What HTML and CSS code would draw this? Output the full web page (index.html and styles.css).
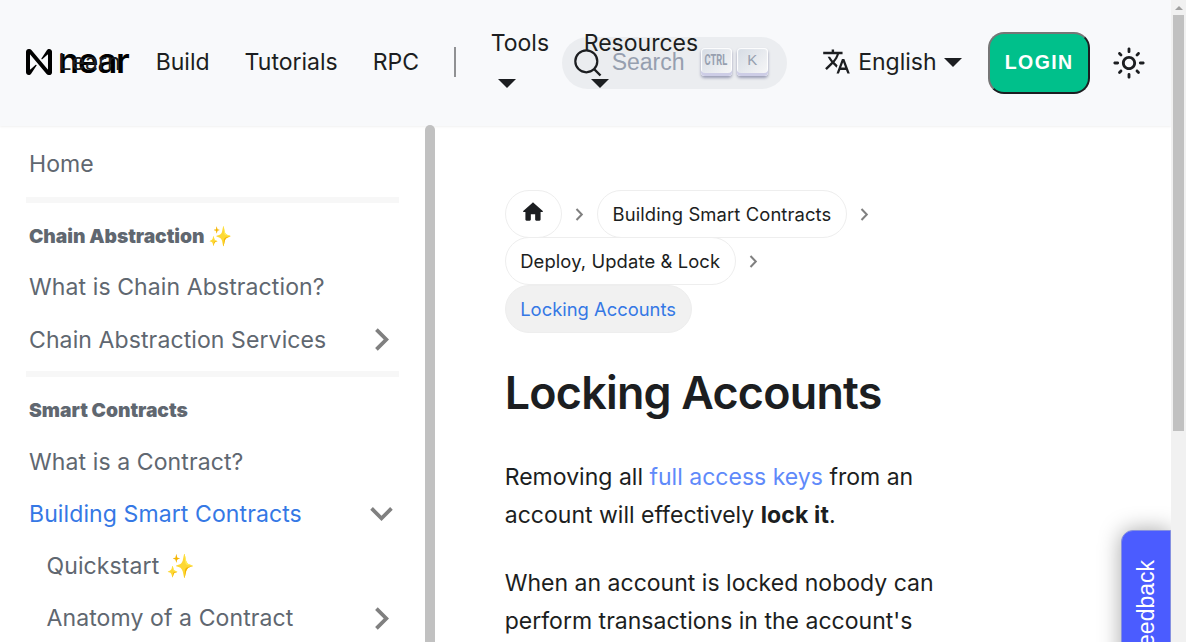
FILE: index.html
```
<!DOCTYPE html>
<html lang="en">
<head>
<meta charset="utf-8">
<title>Locking Accounts</title>
<link rel="stylesheet" href="styles.css">
</head>
<body>
<div class="page">
  <header class="navbar">
    <a class="brand">
      <svg class="brand-mark" width="26" height="26" viewBox="0 0 90 90"><path d="M72.2 4.6L53.4 32.5c-1.3 1.9 1.2 4.2 3 2.6L74.9 19c.5-.4 1.2-.1 1.2.6v50.3c0 .7-.9 1-1.3.5l-56-67C17 1.2 14.4 0 11.5 0h-2C4.3 0 0 4.3 0 9.6v70.8C0 85.7 4.3 90 9.6 90c3.3 0 6.4-1.7 8.2-4.6l18.8-27.9c1.3-1.9-1.2-4.2-3-2.6L15.1 70.9c-.5.4-1.2.1-1.2-.6V20.1c0-.7.9-1 1.3-.5l56 67c1.8 2.2 4.5 3.4 7.3 3.4h2c5.3 0 9.6-4.3 9.6-9.6V9.6C90 4.3 85.7 0 80.4 0c-3.4 0-6.5 1.7-8.2 4.6z"/></svg>
      <span class="brand-name">near</span>
    </a>
    <nav class="links">
      <a>Learn</a><a>Build</a><a>Tutorials</a><a>RPC</a>
    </nav>
    <span class="separator"></span>
    <a class="dropdown tools"><span>Tools</span><i class="caret"></i></a>
    <a class="dropdown resources"><span>Resources</span><i class="caret"></i></a>
    <div class="search">
      <svg class="lens" width="28" height="28" viewBox="0 0 28 28"><circle cx="12.3" cy="12.3" r="11" fill="none" stroke="#1c1e21" stroke-width="2.2"/><path d="m20 20 6.5 6.5" stroke="#1c1e21" stroke-width="2.4"/></svg>
      <span class="placeholder">Search</span>
      <kbd><span class="narrow">CTRL</span></kbd><kbd>K</kbd>
    </div>
    <a class="language">
      <svg width="29" height="29" viewBox="0 0 24 24" fill="#1c1e21"><path d="M12.87 15.07l-2.54-2.51.03-.03c1.74-1.94 2.98-4.17 3.71-6.53H17V4h-7V2H8v2H1v1.99h11.17C11.5 7.92 10.44 9.75 9 11.35 8.07 10.32 7.3 9.19 6.69 8h-2c.73 1.63 1.73 3.17 2.98 4.56l-5.09 5.02L4 19l5-5 3.11 3.11.76-2.04zM18.5 10h-2L12 22h2l1.12-3h4.75L21 22h2l-4.5-12zm-2.62 7l1.62-4.33L19.12 17h-3.24z"/></svg>
      <span>English</span><i class="caret"></i>
    </a>
    <button class="login">LOGIN</button>
    <svg class="sun" width="34" height="34" viewBox="0 0 24 24" fill="#1c1e21"><path d="M12,9c1.65,0,3,1.35,3,3s-1.35,3-3,3s-3-1.35-3-3S10.35,9,12,9 M12,7c-2.76,0-5,2.24-5,5s2.24,5,5,5s5-2.24,5-5 S14.76,7,12,7L12,7z M2,13l2,0c0.55,0,1-0.45,1-1s-0.45-1-1-1l-2,0c-0.55,0-1,0.45-1,1S1.45,13,2,13z M20,13l2,0c0.55,0,1-0.45,1-1 s-0.45-1-1-1l-2,0c-0.55,0-1,0.45-1,1S19.45,13,20,13z M11,2v2c0,0.55,0.45,1,1,1s1-0.45,1-1V2c0-0.55-0.45-1-1-1S11,1.45,11,2z M11,20v2c0,0.55,0.45,1,1,1s1-0.45,1-1v-2c0-0.55-0.45-1-1-1C11.45,19,11,19.45,11,20z M5.99,4.58c-0.39-0.39-1.03-0.39-1.41,0 c-0.39,0.39-0.39,1.03,0,1.41l1.06,1.06c0.39,0.39,1.03,0.39,1.41,0s0.39-1.03,0-1.41L5.99,4.58z M18.36,16.95 c-0.39-0.39-1.03-0.39-1.41,0c-0.39,0.39-0.39,1.03,0,1.41l1.06,1.06c0.39,0.39,1.03,0.39,1.41,0c0.39-0.39,0.39-1.03,0-1.41 L18.36,16.95z M19.42,5.99c0.39-0.39,0.39-1.03,0-1.41c-0.39-0.39-1.03-0.39-1.41,0l-1.06,1.06c-0.39,0.39-0.39,1.03,0,1.41 s1.03,0.39,1.41,0L19.42,5.99z M7.05,18.36c0.39-0.39,0.39-1.03,0-1.41c-0.39-0.39-1.03-0.39-1.41,0l-1.06,1.06 c-0.39,0.39-0.39,1.03,0,1.41s1.03,0.39,1.41,0L7.05,18.36z"/></svg>
  </header>
  <div class="body">
    <aside class="sidebar">
      <div class="menu">
        <a class="item">Home</a>
        <hr>
        <h4>Chain Abstraction ✨</h4>
        <a class="item">What is Chain Abstraction?</a>
        <a class="item">Chain Abstraction Services <svg class="arrow" width="45" height="45" viewBox="0 0 24 24"><path d="M8.59 16.59L13.17 12 8.59 7.41 10 6l6 6-6 6z"/></svg></a>
        <hr>
        <h4>Smart Contracts</h4>
        <a class="item">What is a Contract?</a>
        <a class="item active">Building Smart Contracts <svg class="arrow" width="45" height="45" viewBox="0 0 24 24"><path d="M7.41 8.59 12 13.17l4.59-4.58L18 10l-6 6-6-6z"/></svg></a>
        <a class="item nested">Quickstart ✨</a>
        <a class="item nested">Anatomy of a Contract <svg class="arrow" width="45" height="45" viewBox="0 0 24 24"><path d="M8.59 16.59L13.17 12 8.59 7.41 10 6l6 6-6 6z"/></svg></a>
      </div>
      <div class="thumb"></div>
    </aside>
    <main class="article">
      <nav class="crumbs">
        <div class="crumb-row">
          <a class="crumb home"><svg width="26" height="26" viewBox="0 0 24 24"><path d="M10 19v-5h4v5c0 .55.45 1 1 1h3c.55 0 1-.45 1-1v-7h1.7c.46 0 .68-.57.33-.87L12.67 3.6c-.38-.34-.96-.34-1.34 0l-8.36 7.53c-.34.3-.13.87.33.87H5v7c0 .55.45 1 1 1h3c.55 0 1-.45 1-1z" fill="#1c1e21"/></svg></a>
          <svg class="chev" width="9" height="13" viewBox="0 0 9 13"><path d="m1.5 1 5.3 5.5L1.5 12"/></svg>
          <a class="crumb">Building Smart Contracts</a>
          <svg class="chev" width="9" height="13" viewBox="0 0 9 13"><path d="m1.5 1 5.3 5.5L1.5 12"/></svg>
        </div>
        <div class="crumb-row">
          <a class="crumb">Deploy, Update &amp; Lock</a>
          <svg class="chev" width="9" height="13" viewBox="0 0 9 13"><path d="m1.5 1 5.3 5.5L1.5 12"/></svg>
        </div>
        <div class="crumb-row"><span class="crumb current">Locking Accounts</span></div>
      </nav>
      <h1>Locking Accounts</h1>
      <p>Removing all <a>full access keys</a> from an account will effectively <b>lock it</b>.</p>
      <p>When an account is locked nobody can perform transactions in the account's</p>
    </main>
  </div>
  <div class="feedback"><span>Feedback</span></div>
</div>
<div class="scrollbar"><i class="up"></i><div class="bar"></div></div>
</body>
</html>
```

FILE: styles.css
```
* { box-sizing: border-box; }
body {
  margin: 0; height: 642px; overflow: hidden; display: flex; position: relative;
  background: #fff; color: #1c1e21;
  font: 23.04px/1.65 Inter, sans-serif;
}
.page { width: 1171px; height: 642px; display: flex; flex-direction: column; overflow: hidden; position: relative; }
.navbar {
  height: 126px; flex: none; display: flex; align-items: center; padding: 0 0 2px 26px;
  background: #f8f9fb; box-shadow: 0 1px 2px rgba(0,0,0,.06); white-space: nowrap;
}
.brand { width: 32.4px; flex: none; display: flex; align-items: center; gap: 6px; color: #000; }
.brand-mark { flex: none; }
.brand-name { font-size: 34.5px; line-height: 40px; font-weight: 600; letter-spacing: -1.2px; margin-top: -3px; }
.links { display: flex; gap: 35px; }
.separator { width: 2px; height: 30px; margin-left: 34.5px; background: #909193; }
.dropdown { display: flex; flex-direction: column; flex: none; line-height: 38px; }
.dropdown .caret { margin: 17px 0 12px 7px; }
.tools { width: 57px; margin-left: 35px; }
.resources { width: 0; margin-left: 36px; z-index: 1; }
.caret { width: 0; height: 0; border: 9px solid transparent; border-top-color: #1c1e21; border-bottom: 0; }
.search {
  width: 225px; height: 52px; margin: 2px 0 0 -22px; padding: 0 0 2px 12.5px; flex: none; display: flex; align-items: center;
  border-radius: 26px; background: #ebedf0; color: #969faf;
}
.lens { margin-top: 2px; }
.placeholder { width: 98.5px; padding-left: 9.5px; font: 23.04px "Liberation Sans", sans-serif; }
kbd {
  width: 31px; height: 28px; margin: -1px 5px 0 0; flex: none; display: flex; align-items: center; justify-content: center;
  border-radius: 4px; background: linear-gradient(-225deg, #d5dbe4, #f8f8f8);
  box-shadow: inset 0 -3px 0 #cdcde6, inset 0 0 1px 1px #fff, 0 2px 3px rgba(30,35,90,.4);
  font: 15px/20px "Liberation Sans", sans-serif; padding-bottom: 4px;
}
.narrow { font: bold 15.5px/20px Roboto, sans-serif; transform: scaleX(.6); }
.language { display: flex; align-items: center; margin-left: 35px; }
.language span { margin: 0 7.5px; }
.language .caret { margin-top: 2px; }
.login {
  width: 102px; height: 62px; margin: 2px 0 0 26px; padding: 0 0 1px; border-radius: 16px;
  border: 2px solid; border-color: #767676 #1c1e21 #1c1e21 #767676; background: #00c08b; color: #fff;
  font: bold 19.5px "Liberation Sans", sans-serif; letter-spacing: 1.4px;
}
.sun { margin: 1px 0 0 22px; }
.body { flex: 1; display: flex; min-height: 0; }
.sidebar { width: 435px; flex: none; display: flex; color: #606770; }
.menu { width: 425px; height: 516px; overflow: hidden; padding: 12px 26px 0; letter-spacing: .09px; }
.item { height: 52.3px; padding-left: 3px; display: flex; align-items: center; justify-content: space-between; white-space: nowrap; }
.item.active { color: #3578e5; }
.nested { padding-left: 20.5px; }
.arrow { fill: #808080; flex: none; margin-right: -5px; }
hr { height: 6px; margin: 7px 0 12px; border: 0; background: #f7f7f7; }
h4 { margin: 0; height: 46px; padding: 0 0 3px 3px; font-size: 19.3px; line-height: 43px; font-weight: 900; letter-spacing: -.05px; }
h4 ~ hr { margin-top: 5.5px; }
.thumb { width: 10px; height: 530px; margin-top: -1px; background: #c1c1c1; border-radius: 5px; position: relative; }
.article { flex: 1; padding: 64px 0 0 70px; margin-left: -.3px; }
.crumb-row { display: flex; align-items: center; height: 47.5px; }
.crumb { height: 48px; padding: 0 14.5px; line-height: 47px; border: 1px solid #eee; border-radius: 24px; font-size: 18.4px; letter-spacing: .11px; white-space: nowrap; }
.home { width: 57px; display: flex; align-items: center; padding: 0 14px 3px; }
.chev { fill: none; stroke: #808080; stroke-width: 2; margin: 1px 13.2px 0; }
.current { background: #f1f1f1; color: #3578e5; letter-spacing: 0; }
h1 { margin: 32px 0 35.5px; font-size: 44.8px; line-height: 57.6px; font-weight: 600; letter-spacing: -.75px; }
p { width: 450px; margin: 0 0 30px; }
p a { color: #5f8afa; }
p b { letter-spacing: .12px; }
.feedback {
  position: absolute; left: 1121px; top: 530px; width: 50px; height: 170px; padding-top: 29px; display: flex; justify-content: center;
  background: #4b5cff; color: #fff; border-radius: 12px 0 0 0; border: 1px solid #8590e0; box-shadow: 0 0 22px rgba(0,0,0,.35);
}
.feedback span { writing-mode: vertical-rl; transform: rotate(180deg); font: 23px/48px "Liberation Sans", sans-serif; height: 101px; }
.scrollbar { width: 15px; background: #f1f1f1; display: flex; flex-direction: column; align-items: center; }
.up { width: 0; height: 0; margin: 6px 0 5px; border: 4px solid transparent; border-top: 0; border-bottom-color: #a0a0a0; }
.bar { width: 11px; height: 416px; background: #c1c1c1; }
```
